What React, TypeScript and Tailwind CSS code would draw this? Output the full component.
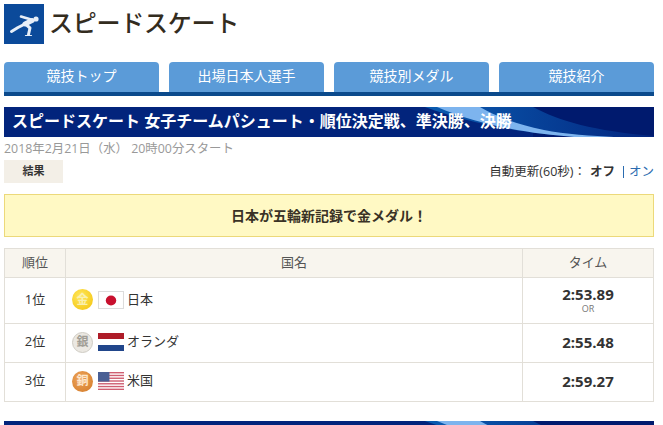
const font = "font-['Open_Sans','Noto_Sans_CJK_JP',sans-serif]";

const tabs = ["競技トップ", "出場日本人選手", "競技別メダル", "競技紹介"];

const rows = [
  { rank: "1位", medal: "金", name: "日本", time: "2:53.89", note: "OR", flag: "jp", h: "h-[46px]" },
  { rank: "2位", medal: "銀", name: "オランダ", time: "2:55.48", flag: "nl", h: "h-[39px]" },
  { rank: "3位", medal: "銅", name: "米国", time: "2:59.27", flag: "us", h: "h-[38px]" },
];

function SkaterLogo() {
  return (
    <div className="w-10 h-10 bg-[#0b4a9a] shrink-0">
      <svg viewBox="0 0 40 40" className="w-10 h-10" fill="none" stroke="#e6eef8" strokeLinecap="round" strokeLinejoin="round">
        <circle cx="32" cy="15" r="2.6" fill="#e6eef8" stroke="none" />
        <path d="M21 20 L28 16.5" strokeWidth="5" />
        <path d="M27 15.5 L17 12.5" strokeWidth="2.6" />
        <path d="M21 20 L14 23.5 L7.5 27.5" strokeWidth="3" />
        <path d="M22 20.5 L26 24 L24.5 30.5" strokeWidth="3" />
        <path d="M21.5 31.5 L27.5 31.5" strokeWidth="1.2" />
      </svg>
    </div>
  );
}

function Medal({ kind }: { kind: string }) {
  const cls =
    kind === "金"
      ? "bg-[radial-gradient(circle_at_40%_35%,#ffe75a,#f3c20c)] text-[#f9f0b0]"
      : kind === "銀"
        ? "bg-[#ebe8e2] text-[#a09d95] border border-[#cfccc4]"
        : "bg-[radial-gradient(circle_at_40%_35%,#eea45a,#d27a28)] text-[#fde7cd]";
  return (
    <div className={`w-[21px] h-[21px] rounded-full flex items-center justify-center text-[12px] font-bold shrink-0 ${cls}`}>
      {kind}
    </div>
  );
}

function Flag({ kind }: { kind: string }) {
  return (
    <svg viewBox="0 0 25 18" className="w-[26px] h-[18px] shrink-0" preserveAspectRatio="none">
      {kind === "jp" && (
        <>
          <rect x="0.5" y="0.5" width="24" height="17" fill="#fff" stroke="#dcdcdc" />
          <circle cx="12.5" cy="9.5" r="5" fill="#c8102e" />
        </>
      )}
      {kind === "nl" && (
        <>
          <rect width="25" height="6" fill="#ae1c28" />
          <rect y="6" width="25" height="6" fill="#fff" />
          <rect y="12" width="25" height="6" fill="#21468b" />
        </>
      )}
      {kind === "us" && (
        <>
          <rect width="25" height="18" fill="#fff" />
          {[0, 1, 2, 3, 4, 5, 6].map((i) => (
            <rect key={i} y={i * 2.77} width="25" height="1.4" fill="#cf5f72" />
          ))}
          <rect width="11" height="9.6" fill="#4a5f94" />
        </>
      )}
    </svg>
  );
}

function Banner({ title, id }: { title?: string; id: string }) {
  return (
    <div className="relative h-[30px] bg-[#02247c] overflow-hidden">
      <svg viewBox="0 0 650 30" preserveAspectRatio="none" className="absolute inset-0 w-full h-full">
        <defs>
          <linearGradient id={id} x1="0" x2="1" y1="0" y2="0">
            <stop offset="0" stopColor="#0a5cb0" />
            <stop offset="1" stopColor="#03257f" />
          </linearGradient>
        </defs>
        <rect x="529" width="121" height="30" fill="#001a6e" />
        <path d="M421 0 L529 0 C555 14 590 24 650 29 L650 30 L580 30 C530 28 470 18 421 0Z" fill={`url(#${id})`} />
        <path d="M433 0 L476 0 C490 8 510 17 540 23 C560 27 590 29 610 30 L570 30 C530 27 480 20 433 0Z" fill="#7db4ee" />
      </svg>
      {title && (
        <div className="relative h-full flex items-center pl-2 pb-[2px] text-white font-bold text-[16px] whitespace-nowrap">{title}</div>
      )}
    </div>
  );
}

export default function App() {
  return (
    <div className={`${font} w-[663px] h-[425px] overflow-hidden bg-white px-1 pt-1 text-[#333]`}>
      <div className="w-[650px]">
        <div className="flex items-center gap-[5px] h-10">
          <SkaterLogo />
          <div className="text-[24px] leading-none text-[#332c1e] font-medium tracking-[-0.25px] pb-[2px]">スピードスケート</div>
        </div>

        <div className="mt-[18px] flex gap-[10px] border-b-4 border-[#0b4a8c]">
          {tabs.map((t) => (
            <div key={t} className="w-[155px] h-[30px] pb-[3px] bg-[#5b9bd8] rounded-t-[4px] flex items-center justify-center text-[14px] text-white">
              {t}
            </div>
          ))}
        </div>

        <div className="mt-[11px]">
          <Banner id="swoosh-top" title="スピードスケート 女子チームパシュート・順位決定戦、準決勝、決勝" />
        </div>

        <div className="mt-[2px] h-5 text-[12.4px] leading-5 text-[#999]">2018年2月21日（水） 20時00分スタート</div>

        <div className="mt-px flex items-center justify-between h-[23px]">
          <div className="w-[59px] h-[23px] bg-[#f3efe7] flex items-center justify-center text-[11px] font-bold">結果</div>
          <div className="text-[12.5px] flex items-center pt-[1px]">
            <span>自動更新(60秒)：</span>
            <span className="font-bold ml-1">オフ</span>
            <span className="text-[#2b6cb0] ml-2 border-l border-[#2b6cb0] pl-[5px] leading-3">オン</span>
          </div>
        </div>

        <div className="mt-[11px] h-[43px] bg-[#fff9c4] border border-[#ecd97a] flex items-center justify-center text-[14px] font-bold text-[#3a3226]">
          日本が五輪新記録で金メダル！
        </div>

        <div className="mt-[11px] border border-[#e2dfd8]">
          <div className="flex h-[29px] bg-[#f8f5ee] text-[13px] text-[#555] border-b border-[#e2dfd8]">
            <div className="w-[61px] flex items-center justify-center border-r border-[#e2dfd8]">順位</div>
            <div className="flex-1 flex items-center justify-center">国名</div>
            <div className="w-[131px] flex items-center justify-center border-l border-[#e2dfd8]">タイム</div>
          </div>
          {rows.map((r, i) => (
            <div key={r.rank} className={`flex ${r.h} text-[13px] ${i < 2 ? "border-b border-[#e2dfd8]" : ""}`}>
              <div className="w-[61px] pb-[2px] flex items-center justify-center border-r border-[#e2dfd8]">{r.rank}</div>
              <div className="flex-1 pb-[2px] flex items-center pl-[6px] gap-[5px]">
                <Medal kind={r.medal} />
                <Flag kind={r.flag} />
                <span className="ml-[-2px]">{r.name}</span>
              </div>
              <div className="w-[131px] pb-[3px] flex flex-col items-center justify-center border-l border-[#e2dfd8]">
                <div className="text-[15px] font-bold leading-[20px]">{r.time}</div>
                {r.note && <div className="text-[9px] leading-[10px] text-[#777]">{r.note}</div>}
              </div>
            </div>
          ))}
        </div>

        <div className="mt-[19px]">
          <Banner id="swoosh-bottom" />
        </div>
      </div>
    </div>
  );
}
